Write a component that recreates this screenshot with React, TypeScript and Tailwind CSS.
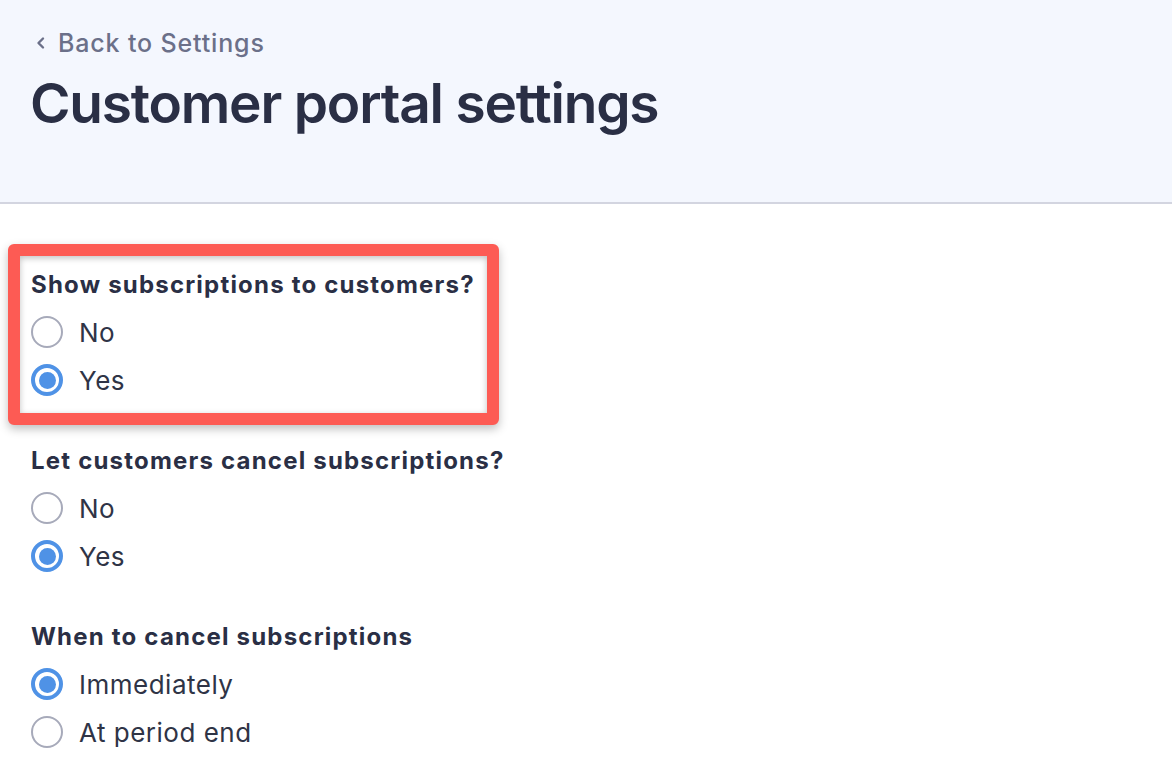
import React, { useState } from "react";

interface Option {
    value: string;
    label: string;
}

interface RadioGroupProps {
    title: string;
    options: Option[];
    value: string;
    onChange: (value: string) => void;
}

const Radio: React.FC<{ checked: boolean }> = ({ checked }) => (
    <span
      className={`flex h-[32px] w-[32px] shrink-0 items-center justify-center rounded-full bg-white ${
        checked ? "border-[4px] border-[#4f92e6]" : "border-[2px] border-[#a7aaba]"
      }`}
    >
        {checked && <span className="h-[17px] w-[17px] rounded-full bg-[#4f92e6]" />}
    </span>
);

const RadioGroup: React.FC<RadioGroupProps> = ({ title, options, value, onChange }) => (
    <div>
        <div className="mb-[7px] h-[32px] text-[24px] leading-[32px] font-bold tracking-[1.2px] whitespace-nowrap text-[#2a2f45]">
            {title}
        </div>
        {options.map((option) => (
            <label
              key={option.value}
              onClick={() => onChange(option.value)}
              className="flex h-[48px] cursor-pointer items-center gap-[16px]"
            >
                <Radio checked={value === option.value} />
                <span className="text-[26px] tracking-[0.5px] text-[#2f3446]">{option.label}</span>
            </label>
        ))}
    </div>
);

const yesNo: Option[] = [
    { value: "no", label: "No" },
    { value: "yes", label: "Yes" },
];

export default function App() {
    const [showSubs, setShowSubs] = useState("yes");
    const [allowCancel, setAllowCancel] = useState("yes");
    const [cancelMode, setCancelMode] = useState("immediately");

    return (
        <div
          className="min-h-screen bg-white"
          style={{ fontFamily: "Inter, 'Noto Sans', sans-serif" }}
        >
            <div className="h-[204px] border-b-2 border-[#d3d5e0] bg-[#f4f7fe] px-[30px] pt-[28px]">
                <a href="#" className="flex items-center gap-[10px] text-[25px] leading-[30px] font-medium tracking-[0.85px] text-[#6b7089]">
                    <svg width="14" height="14" viewBox="0 0 14 14" className="ml-[4px]">
                        <path d="M9 2.5 L4.5 7 L9 11.5" fill="none" stroke="#6b7089" strokeWidth="2.4" strokeLinecap="round" strokeLinejoin="round" />
                    </svg>
                    Back to Settings
                </a>
                <h1 className="mt-[12px] text-[55px] leading-[66px] font-semibold tracking-[-1.2px] text-[#2a2f45]">
                    Customer portal settings
                </h1>
            </div>

            <div className="pt-[40px]">
                <div className="ml-[8px] w-[491px] rounded-[6px] border-[12px] border-[#fd5b54] bg-white pt-[13px] pr-[11px] pb-[9px] pl-[11px] shadow-[0_4px_10px_rgba(0,0,0,0.25),inset_0_2px_6px_rgba(0,0,0,0.25)]">
                    <RadioGroup
                      title="Show subscriptions to customers?"
                      options={yesNo}
                      value={showSubs}
                      onChange={setShowSubs}
                    />
                </div>

                <div className="mt-[20px] flex flex-col gap-[41px] px-[31px]">
                    <RadioGroup
                      title="Let customers cancel subscriptions?"
                      options={yesNo}
                      value={allowCancel}
                      onChange={setAllowCancel}
                    />
                    <RadioGroup
                      title="When to cancel subscriptions"
                      options={[
                          { value: "immediately", label: "Immediately" },
                          { value: "period_end", label: "At period end" },
                      ]}
                      value={cancelMode}
                      onChange={setCancelMode}
                    />
                </div>
            </div>
        </div>
    );
}
